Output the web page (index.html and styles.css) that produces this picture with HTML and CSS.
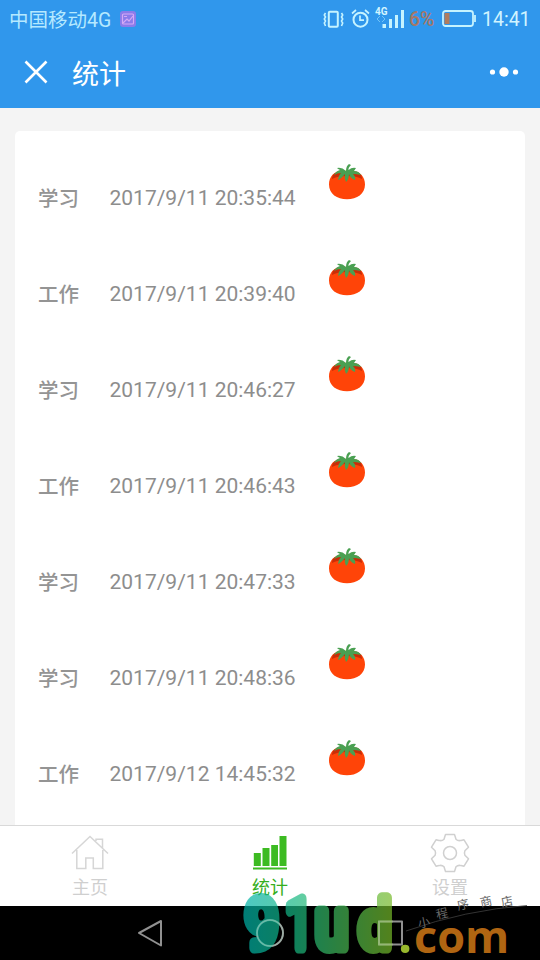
FILE: index.html
```
<!DOCTYPE html>
<html lang="zh-CN">
<head>
<meta charset="utf-8">
<title>统计</title>
<link rel="stylesheet" href="styles.css">
</head>
<body>
<svg width="0" height="0" class="defs">
  <symbol id="tomato" viewBox="0 0 40 40">
    <path d="M20 9C32 7 38 14 38 22.500C38 32 30 37.300 20 37.300S2 32 2 22.500C2 14 8 7 20 9Z" fill="#ff4408"/>
    <path d="M8 11Q20 7 32 11Q35 13 35 17Q30 14 20 14Q10 14 5 17Q5 13 8 11Z" fill="#c92d08"/>
    <path d="M19 9Q19 4 22 2L24 3Q21 6 21.5 8Q25 5 29 6L27 9Q32 9 34 13Q29 12 26 12Q29 15 28 18Q23 16 22 12Q22 17 19 20Q17 16 18 12Q14 17 11 18Q11 14 14 11Q10 11 7 13Q9 9 13 8Q11 7 10 6Q15 5 19 9Z" fill="#4aa052"/>
  </symbol>
</svg>
<div class="status">
  <span class="carrier">中国移动4G</span>
  <svg class="badge" width="18" height="18" viewBox="0 0 18 18"><rect x="1" y="1" width="16" height="16" rx="3" fill="#8b7bea"/><g fill="none" stroke="#d5a9f5" stroke-width="1.2"><rect x="3.5" y="4" width="11" height="10" rx="1"/><path d="M4 13l4-4 2 2 4-5M5 6.5h3"/></g></svg>
  <svg class="indicators" width="96" height="32" viewBox="322 2 96 32">
    <g fill="none" stroke="#c5f3ff" stroke-width="2">
      <rect x="328.8" y="10.8" width="9" height="15" rx="1"/>
      <path d="M325.5 12l-1.2 2 1.2 2-1.2 2 1.2 2-1.2 2 1.2 3M341.5 12l1.2 2-1.2 2 1.2 2-1.2 2 1.2 2-1.2 3" stroke-width="1.6"/>
      <circle cx="360.5" cy="18.7" r="7"/><path d="M360 14.5v4.7h4M352 12.5l4-3.5M369 12.5l-4-3.5" stroke-width="1.7"/>
    </g>
    <text x="375" y="13.5" class="net">4G</text>
    <path d="M380 15l-3 3 3 3M382 15l3 3-3 3" fill="none" stroke="#73c4f7"/>
    <path d="M382.5 23h3.5v4h-3.5zM389 18h3v9h-3zM395 14h3v13h-3zM401 9h3v18h-3z" fill="#c5f3ff"/>
  </svg>
  <span class="percent">6%</span>
  <svg class="battery" width="34" height="18" viewBox="0 0 34 18"><rect x="1" y="1" width="30" height="15" rx="2.5" fill="none" stroke="#c5f3ff" stroke-width="1.8"/><path d="M33 5v7" stroke="#c5f3ff" stroke-width="1.8"/><rect x="2.5" y="3" width="5" height="11" fill="#b17c5d"/></svg>
  <span class="time">14:41</span>
</div>
<header class="header">
  <svg width="24" height="24" viewBox="0 0 24 24"><path d="M1.5 1.5l21 21M22.5 1.5l-21 21" stroke="#fff" stroke-width="2.6"/></svg>
  <h1>统计</h1>
  <svg class="more" width="30" height="12" viewBox="0 0 30 12" fill="#fff"><circle cx="3.5" cy="6" r="2.6"/><circle cx="15" cy="6" r="4.7"/><circle cx="26.5" cy="6" r="2.6"/></svg>
</header>
<main class="page">
  <div class="card">
    <div class="row"><span class="kind">学习</span><span class="date">2017/9/11 20:35:44</span><svg class="tomato"><use href="#tomato"/></svg></div>
    <div class="row"><span class="kind">工作</span><span class="date">2017/9/11 20:39:40</span><svg class="tomato"><use href="#tomato"/></svg></div>
    <div class="row"><span class="kind">学习</span><span class="date">2017/9/11 20:46:27</span><svg class="tomato"><use href="#tomato"/></svg></div>
    <div class="row"><span class="kind">工作</span><span class="date">2017/9/11 20:46:43</span><svg class="tomato"><use href="#tomato"/></svg></div>
    <div class="row"><span class="kind">学习</span><span class="date">2017/9/11 20:47:33</span><svg class="tomato"><use href="#tomato"/></svg></div>
    <div class="row"><span class="kind">学习</span><span class="date">2017/9/11 20:48:36</span><svg class="tomato"><use href="#tomato"/></svg></div>
    <div class="row"><span class="kind">工作</span><span class="date">2017/9/12 14:45:32</span><svg class="tomato"><use href="#tomato"/></svg></div>
  </div>
</main>
<nav class="tabs">
  <div class="tab">
    <svg width="40" height="40" viewBox="0 0 40 40" fill="none" stroke="#d6d6d6" stroke-width="1.5"><path d="M2 20.5L20 3.5l18 17M6.8 17v18.5h9V25h7.5v10.5h9.5V17M26 8V6.2h6.5V15"/></svg>
    <span>主页</span>
  </div>
  <div class="tab active">
    <svg width="40" height="40" viewBox="0 0 40 40" fill="#3dbb22"><path d="M3.8 20h7v13h-7zM12.5 15h7v18h-7zM21.2 12h6.8v21h-6.8zM29.5 3h7v30h-7zM3 34.5h34v2H3z"/></svg>
    <span>统计</span>
  </div>
  <div class="tab">
    <svg width="40" height="40" viewBox="0 0 40 40" fill="none" stroke="#d0d0d0" stroke-width="1.5" stroke-linejoin="round"><circle cx="20" cy="20" r="6.5"/><path d="M15.5 1.5h9L26 6.2Q28 8.2 31 7.4l3-.6 4.5 7.4-3.6 3.6Q34 20 34.900 22.200L38.500 25.800 34 33.200l-3-.6Q28 31.800 26 33.800L24.500 38.500h-9L14 33.800Q12 31.800 9 32.600l-3 .6-4.500-7.400 3.600-3.600Q6 20 5.100 17.800L1.500 14.200 6 6.800l3 .6Q12 8.200 14 6.200z"/></svg>
    <span>设置</span>
  </div>
</nav>
<div class="system">
  <svg width="540" height="54" viewBox="0 906 540 54" fill="none" stroke="#919191" stroke-width="2" stroke-linejoin="round"><path d="M161 921v24.500L139 933z"/><circle cx="270" cy="933" r="13"/><rect x="379" y="921.500" width="23" height="23"/></svg>
</div>
<svg class="watermark" width="310" height="80" viewBox="230 880 310 80">
  <defs>
    <linearGradient id="fade" gradientUnits="userSpaceOnUse" x1="243" x2="393" y1="0" y2="0"><stop offset="0" stop-color="#00b3aa"/><stop offset=".35" stop-color="#18b882"/><stop offset=".65" stop-color="#43b858"/><stop offset="1" stop-color="#78ba28"/></linearGradient>
    <mask id="brand" maskUnits="userSpaceOnUse" x="230" y="880" width="180" height="80">
      <g class="brand">
        <text transform="translate(262 948) scale(.86 1)" font-size="69">9</text>
        <text transform="translate(299 948) scale(.7 1)" font-size="69">1</text>
        <text transform="translate(331.500 948) scale(.86 1)" font-size="70">u</text>
        <text transform="translate(375 948) scale(.88 1)" font-size="66">d</text>
      </g>
    </mask>
  </defs>
  <rect x="230" y="880" width="180" height="80" fill="url(#fade)" opacity=".7" mask="url(#brand)"/>
  <circle cx="270" cy="933" r="13" fill="none" stroke="#a5c9b8" stroke-width="1.500" opacity=".5"/>
  <path d="M393 921.500h-14v23h14" fill="none" stroke="#a9bd92" stroke-width="2" opacity=".6"/>
  <text class="dot" x="398" y="953">.</text>
  <text class="com" x="414" y="953">com</text>
  <path d="M406 931Q465 910 527 905.500" fill="none" stroke="#404040" stroke-width=".8"/>
  <g class="script">
    <text transform="translate(419 928) rotate(-12)">小</text>
    <text transform="translate(437 919) rotate(-12)">程</text>
    <text transform="translate(458 910) rotate(-12)">序</text>
    <text transform="translate(481 907) rotate(-12)">商</text>
    <text transform="translate(502 907) rotate(-12)">店</text>
  </g>
</svg>
</body>
</html>
```
FILE: styles.css
```
* { box-sizing: border-box; }
body {
  margin: 0;
  width: 540px;
  height: 960px;
  overflow: hidden;
  display: flex;
  flex-direction: column;
  position: relative;
  background: #f4f4f4;
  font-family: Roboto, "Noto Sans CJK SC", sans-serif;
}
svg { display: block; flex: none; }
.defs { position: absolute; }
.status {
  height: 36px;
  flex: none;
  display: flex;
  align-items: center;
  padding: 1px 10px 0 9px;
  background: #3097ec;
  color: #b5e9ff;
  font-size: 19.5px;
  white-space: nowrap;
}
.carrier { width: 110px; }
.indicators { margin-left: auto; margin-right: -9px; }
.net { font-size: 10px; font-weight: 700; fill: #d4f5ff; }
.percent { width: 33px; color: #a77867; font-weight: 500; }
.percent, .time { padding-top: 1px; }
.battery { margin-right: 6px; }
.time { width: 48px; color: #d0f4ff; }
.header {
  height: 72px;
  flex: none;
  display: flex;
  align-items: center;
  padding: 0 21px 0 24px;
  background: #3097ec;
  color: #fff;
}
.header h1 { margin: 6px 0 0 24px; font-size: 27px; font-weight: 400; line-height: 40px; }
.more { margin-left: auto; }
.page { height: 717px; flex: none; padding: 23px 15px 0; overflow: hidden; }
.card { background: #fff; height: 720px; border-radius: 5px; padding-top: 19px; }
.row { height: 96px; display: flex; align-items: center; padding-left: 23px; color: #8d8d8d; font-size: 21px; }
.kind { width: 71.500px; font-size: 20.500px; padding-bottom: 2px; font-weight: 500; color: #949494; }
.date { width: 217.500px; white-space: nowrap; }
.tomato { width: 40px; height: 40px; margin-bottom: 32px; }
.tabs {
  height: 81px;
  flex: none;
  display: flex;
  background: #fff;
  border-top: 1px solid #d9d9d9;
}
.tab {
  flex: 1;
  display: flex;
  flex-direction: column;
  align-items: center;
  padding-top: 7px;
  color: #cfcfcf;
  font-size: 18px;
  line-height: 30px;
}
.active { color: #35ae20; }
.system { height: 54px; flex: none; background: #000; }
.watermark { position: absolute; left: 230px; top: 880px; }
.brand {
  font-family: Roboto, sans-serif;
  font-weight: 400;
  text-anchor: middle;
  fill: #fff;
  stroke: #fff;
  stroke-width: 11px;
  stroke-linejoin: round;
}
.dot { font: 700 50px "Open Sans", sans-serif; fill: #98b82d; }
.com { font: 700 45px "Open Sans", sans-serif; fill: #b06512; }
.script { font: 12px "Noto Sans CJK SC", sans-serif; fill: #686868; }
```
